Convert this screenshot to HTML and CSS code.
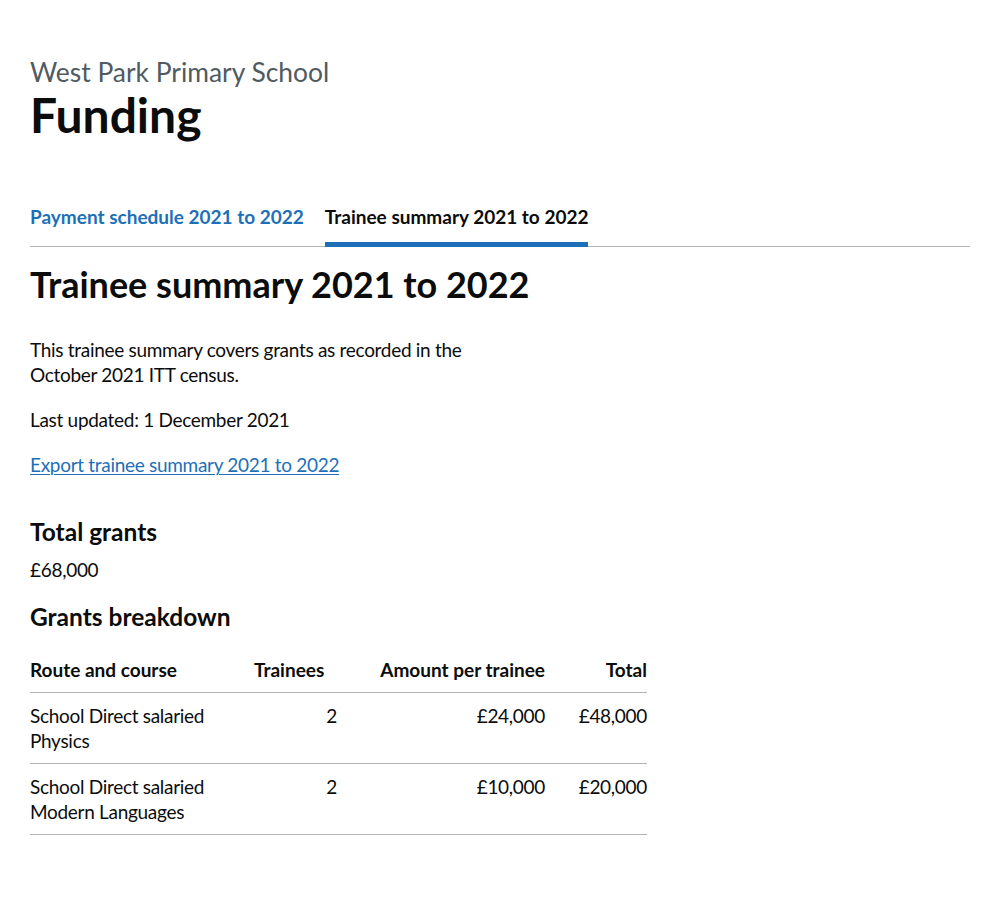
FILE: index.html
```html
<!DOCTYPE html>
<html lang="en">
<head>
<meta charset="utf-8">
<title>Funding</title>
<link rel="stylesheet" href="styles.css">
</head>
<body>
<main class="page">
  <span class="caption">West Park Primary School</span>
  <h1 class="title">Funding</h1>

  <nav class="subnav" aria-label="Funding navigation">
    <ul class="subnav__list">
      <li class="subnav__item"><a class="subnav__link" href="#">Payment schedule 2021 to 2022</a></li>
      <li class="subnav__item"><a class="subnav__link subnav__link--current" href="#" aria-current="page">Trainee summary 2021 to 2022</a></li>
    </ul>
  </nav>

  <h2 class="heading-l">Trainee summary 2021 to 2022</h2>

  <p class="body body--narrow">This trainee summary covers grants as recorded in the October 2021 ITT census.</p>
  <p class="body">Last updated: 1 December 2021</p>
  <p class="body"><a class="link" href="#">Export trainee summary 2021 to 2022</a></p>

  <h3 class="heading-m heading-m--spaced">Total grants</h3>
  <p class="body">£68,000</p>

  <h3 class="heading-m">Grants breakdown</h3>

  <table class="table">
    <colgroup>
      <col class="col-route">
      <col class="col-trainees">
      <col class="col-amount">
      <col class="col-total">
    </colgroup>
    <thead>
      <tr>
        <th class="cell cell--head">Route and course</th>
        <th class="cell cell--head">Trainees</th>
        <th class="cell cell--head cell--num">Amount per trainee</th>
        <th class="cell cell--head cell--num">Total</th>
      </tr>
    </thead>
    <tbody>
      <tr>
        <td class="cell">School Direct salaried Physics</td>
        <td class="cell cell--num">2</td>
        <td class="cell cell--num">£24,000</td>
        <td class="cell cell--num">£48,000</td>
      </tr>
      <tr>
        <td class="cell">School Direct salaried Modern Languages</td>
        <td class="cell cell--num">2</td>
        <td class="cell cell--num">£10,000</td>
        <td class="cell cell--num">£20,000</td>
      </tr>
    </tbody>
  </table>
</main>
</body>
</html>
```

FILE: styles.css
```css
html, body {
  margin: 0;
  padding: 0;
  background: #ffffff;
}

body {
  font-family: Lato, "Liberation Sans", Arial, sans-serif;
  color: #0b0c0c;
  -webkit-font-smoothing: antialiased;
}

.page {
  display: block;
  max-width: 940px;
  padding: 57px 30px 40px;
}

.caption {
  display: block;
  font-size: 26.4px;
  line-height: 30px;
  font-weight: 400;
  color: #505a5f;
  margin-bottom: 3px;
}

.title {
  font-size: 48px;
  line-height: 50px;
  font-weight: 700;
  margin: 0 0 64px;
}

.subnav {
  margin-bottom: 17px;
}

.subnav__list {
  list-style: none;
  margin: 0;
  padding: 0;
  display: flex;
  gap: 21px;
  border-bottom: 1px solid #b1b4b6;
}

.subnav__item {
  margin: 0;
}

.subnav__link {
  display: block;
  position: relative;
  font-size: 19px;
  line-height: 25px;
  font-weight: 700;
  color: #1d70b8;
  text-decoration: none;
  padding: 0 0 18px;
  margin-bottom: -1px;
}

.subnav__link--current {
  color: #0b0c0c;
  box-shadow: inset 0 -5px 0 #1d70b8;
}

.heading-l {
  font-size: 36px;
  line-height: 40px;
  font-weight: 700;
  margin: 0 0 33px;
}

.heading-m {
  font-size: 24.5px;
  line-height: 30px;
  font-weight: 700;
  margin: 0 0 10px;
}

.heading-m--spaced {
  margin-top: 40px;
}

.body {
  font-size: 19px;
  line-height: 25px;
  letter-spacing: -0.3px;
  margin: 0 0 20px;
}

.body--narrow {
  max-width: 470px;
}

.link {
  color: #1d70b8;
  text-decoration: underline;
  text-underline-offset: 2px;
  text-decoration-thickness: 1px;
}

.table {
  width: 617px;
  border-collapse: collapse;
  border-spacing: 0;
  table-layout: fixed;
  margin-top: 15px;
}

.col-route { width: 224px; }
.col-trainees { width: 103px; }
.col-amount { width: 208px; }
.col-total { width: 82px; }

.cell {
  font-size: 19px;
  line-height: 25px;
  padding: 10px 20px 10px 0;
  border-bottom: 1px solid #b1b4b6;
  text-align: left;
  vertical-align: top;
  font-weight: 400;
  letter-spacing: -0.3px;
}

.cell:last-child {
  padding-right: 0;
}

.cell--head {
  font-weight: 700;
  letter-spacing: 0;
}

.cell--num {
  text-align: right;
}
```
